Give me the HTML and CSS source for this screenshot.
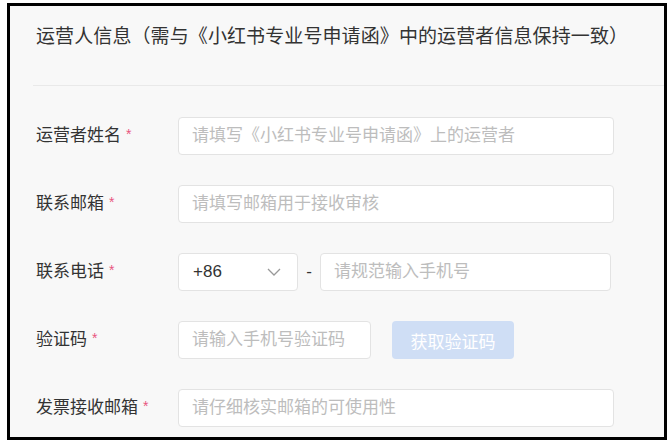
FILE: index.html
```html
<!DOCTYPE html>
<html lang="zh-CN">
<head>
    <meta charset="UTF-8">
    <title>运营人信息</title>
    <link rel="stylesheet" href="styles.css">
</head>
<body>
<div class="frame">
    <div class="header">
        <h2>运营人信息（需与《小红书专业号申请函》中的运营者信息保持一致）</h2>
    </div>

    <div class="form">
        <div class="row">
            <label>运营者姓名<span class="req">*</span></label>
            <input class="field" type="text" placeholder="请填写《小红书专业号申请函》上的运营者">
        </div>
        <div class="row">
            <label>联系邮箱<span class="req">*</span></label>
            <input class="field" type="text" placeholder="请填写邮箱用于接收审核">
        </div>
        <div class="row">
            <label>联系电话<span class="req">*</span></label>
            <div class="select">
                <span>+86</span>
                <svg width="14" height="8" viewBox="0 0 14 8"><path d="M1 1l6 6 6-6" fill="none" stroke="#999" stroke-width="1.3"/></svg>
            </div>
            <span class="dash">-</span>
            <input class="field phone" type="text" placeholder="请规范输入手机号">
        </div>
        <div class="row">
            <label>验证码<span class="req">*</span></label>
            <input class="field code" type="text" placeholder="请输入手机号验证码">
            <button class="code-btn" disabled>获取验证码</button>
        </div>
        <div class="row">
            <label>发票接收邮箱<span class="req">*</span></label>
            <input class="field" type="text" placeholder="请仔细核实邮箱的可使用性">
        </div>
    </div>
</div>
</body>
</html>
```

FILE: styles.css
```css
body {
    margin: 0;
    background-color: #ffffff;
    font-family: 'Liberation Sans', 'Noto Sans CJK SC', sans-serif;
    color: #333;
}
.frame {
    margin: 3px 0 0 7px;
    width: 660px;
    height: 437px;
    box-sizing: border-box;
    border: 3px solid #000;
    background-color: #f8f8f8;
    overflow: hidden;
}
.header {
    margin-left: 23px;
    padding: 19px 0 0 3px;
    height: 80px;
    box-sizing: border-box;
    border-bottom: 1px solid #e9e9e9;
}
.header h2 {
    margin: 0;
    font-size: 19px;
    font-weight: normal;
    line-height: 24px;
    letter-spacing: 0.1px;
    color: #333;
    white-space: nowrap;
}
.form {
    padding: 31px 0 0 26px;
}
.row {
    display: flex;
    align-items: center;
    height: 38px;
    margin-bottom: 30px;
}
.row label {
    width: 142px;
    font-size: 17px;
    line-height: 24px;
    color: #333;
}
.req {
    margin-left: 5px;
    color: #e8557e;
    font-size: 14px;
    position: relative;
    top: -2px;
}
.field {
    width: 436px;
    height: 38px;
    box-sizing: border-box;
    padding: 0 13px;
    border: 1px solid #e3e3e3;
    border-radius: 4px;
    background-color: #fff;
    font-family: inherit;
    font-size: 17px;
    color: #333;
    outline: none;
}
.field::placeholder {
    color: #bdbdbd;
}
.select {
    width: 120px;
    height: 38px;
    box-sizing: border-box;
    display: flex;
    align-items: center;
    justify-content: space-between;
    padding: 0 16px 0 14px;
    border: 1px solid #e3e3e3;
    border-radius: 4px;
    background-color: #fff;
    font-size: 17px;
    color: #333;
}
.dash {
    width: 22px;
    text-align: center;
    font-size: 17px;
    color: #333;
}
.field.phone {
    width: 291px;
}
.field.code {
    width: 193px;
}
.code-btn {
    margin-left: 21px;
    width: 122px;
    height: 38px;
    border: none;
    border-radius: 4px;
    background-color: #cfdef5;
    color: #fff;
    font-family: inherit;
    font-size: 17px;
}
```
